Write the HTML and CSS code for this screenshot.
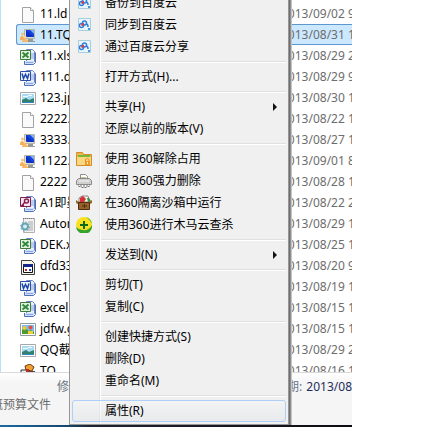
FILE: index.html
```html
<!DOCTYPE html>
<html lang="zh-CN">
<head>
  <meta charset="UTF-8">
  <title>文件列表</title>
  <link rel="stylesheet" href="styles.css">
</head>
<body>

  <!-- icon shapes -->
  <svg class="defs" aria-hidden="true">
    <symbol id="i-file" viewBox="0 0 16 16">
      <path d="M2.500 .5h8l3 3v12h-11z" fill="#fafafa" stroke="#a3a3a3"/>
      <path d="M10.500 .5v3h3" fill="#fff" stroke="#a3a3a3"/>
    </symbol>
    <symbol id="i-user" viewBox="0 0 16 16">
      <path d="M4.500 1.500h10v9h-10z" fill="#dcdcd2" stroke="#b5b4a8"/>
      <path d="M6 2h8v7H6z" fill="#0a31c8"/>
      <path d="M6 2h3l5 5v2z" fill="#1746e0"/>
      <path d="M10 2h4v4z" fill="#7fb0f8"/>
      <path d="M8 11h5v2h2v1H7v-1h1z" fill="#9a9a94"/>
      <circle cx="2.500" cy="6" r="1.500" fill="#f7c27a"/>
      <path d="M0 11q0-3 2.500-3L5 10v2H0z" fill="#f5ad58"/>
      <circle cx="5" cy="9" r="1.500" fill="#ffd595"/>
      <path d="M2 14q0-3 3-3t3 3z" fill="#f9b764"/>
    </symbol>
    <symbol id="i-pages" viewBox="0 0 16 16">
      <path d="M6.500 .5h6l2 2v10h-8z" fill="#e8f0fd" stroke="#6a86c4"/>
      <path d="M4.500 12v3.500h9l2-2v-10" fill="none" stroke="#4f70b8"/>
      <path d="M5 12h9v3H5z" fill="#cfdef8"/>
      <path d="M11 5h3M11 7h3M11 9h3M6 13.500h7" stroke="#8fa9de"/>
    </symbol>
    <symbol id="i-xls" viewBox="0 0 16 16">
      <use href="#i-pages"/>
      <path d="M.5 1.500h10v9H.5z" fill="#e3f3df" stroke="#3c7a3e"/>
      <path d="M2.500 3.500l6 5M8.500 3.500l-6 5" stroke="#2f8a3b" stroke-width="2"/>
    </symbol>
    <symbol id="i-doc" viewBox="0 0 16 16">
      <use href="#i-pages"/>
      <path d="M.5 1.500h10v9H.5z" fill="#edf3ff" stroke="#2b50a4"/>
      <path d="M2 3.500l1.500 5 2-4 2 4 1.500-5" fill="none" stroke="#1d45a8" stroke-width="1.500"/>
    </symbol>
    <symbol id="i-mdb" viewBox="0 0 16 16">
      <use href="#i-pages"/>
      <path d="M.5 1.500h10v9H.5z" fill="#f7e8f0" stroke="#7c1f4d"/>
      <circle cx="6.500" cy="5" r="2" fill="none" stroke="#8b1e50" stroke-width="1.500"/>
      <path d="M5 6L2 9.500h2" fill="none" stroke="#8b1e50" stroke-width="1.500"/>
    </symbol>
    <symbol id="i-img" viewBox="0 0 16 16">
      <path d="M.5 1.500h15v12H.5z" fill="#fff" stroke="#a8a8a8"/>
      <path d="M2 3h12v9H2z" fill="#a9dbf4"/>
      <path d="M3 5h5v1H3zM8 4h4v1H8z" fill="#f4fbff"/>
      <path d="M2 9l4-2 3 2 5-2v5H2z" fill="#34806f"/>
      <path d="M2 11h12v1H2z" fill="#2e86bd"/>
    </symbol>
    <symbol id="i-gif" viewBox="0 0 16 16">
      <path d="M.5 1.500h15v12H.5z" fill="#fff" stroke="#8f9a9c"/>
      <path d="M2 3h12v9H2z" fill="#7bb8f0"/>
      <path d="M2 8l3-2 4 3 2-1 3 2v2H2z" fill="#4d9a32"/>
      <circle cx="4.500" cy="6" r="2" fill="#f0cb2d"/>
      <circle cx="10.500" cy="5.500" r="2" fill="#e0503a"/>
      <path d="M8 9h5v3H8z" fill="#f4d03b"/>
    </symbol>
    <symbol id="i-ini" viewBox="0 0 16 16">
      <path d="M3.500 1.500h11v14h-11z" fill="#f2f2f2" stroke="#b0b0b0"/>
      <path d="M3 1.500h12" stroke="#777" stroke-dasharray="1 1"/>
      <path d="M8 5h5M9 7h4M10 9h3M9 11h4M8 13h5" stroke="#a9a9a9"/>
      <circle cx="5" cy="9.500" r="3" fill="#d9eef2" stroke="#6aa5b3" stroke-width="2"/>
      <circle cx="5" cy="9.500" r="4.500" fill="none" stroke="#6aa5b3" stroke-dasharray="1.500 2"/>
    </symbol>
    <symbol id="i-bat" viewBox="0 0 16 16">
      <path d="M1.500 1.500h10l3 3v11h-13z" fill="#f7f5e6" stroke="#3f3f3f"/>
      <path d="M3.500 5.500h9v8h-9z" fill="#fff" stroke="#111"/>
      <path d="M3 5h10v3H3z" fill="#16258c"/>
      <path d="M5 10h2v2H5z" fill="#d02020"/>
      <path d="M9 10h2v2H9z" fill="#2440d0"/>
    </symbol>
    <symbol id="i-tq" viewBox="0 0 16 16">
      <path d="M5 2l5-2 4 3-2 4-6-1z" fill="#f0a030" stroke="#6b3a12"/>
      <path d="M1 6h8v8H1z" fill="#e9eef7" stroke="#333"/>
      <path d="M3 8h4v3H3z" fill="#2f63c8"/>
      <path d="M9 7h6v7H9z" fill="#55483c"/>
      <path d="M6 5h3v3H6z" fill="#c22b1d"/>
    </symbol>
    <symbol id="i-cloud" viewBox="0 0 16 16">
      <path d="M2.500 1.500h12v12h-12z" fill="#e8f6fb" stroke="#a5cfdd"/>
      <circle cx="8.500" cy="6" r="2" fill="none" stroke="#2c7fe0" stroke-width="1.500"/>
      <circle cx="5.500" cy="8.500" r="2" fill="#fff" stroke="#2c7fe0" stroke-width="1.500"/>
      <path d="M5.500 8.500l2.500-2" stroke="#e23b35" stroke-width="2"/>
      <path d="M10 7q2 0 2 3" fill="none" stroke="#2c7fe0" stroke-width="1.500"/>
      <path d="M12 11h2v2h-2z" fill="#4a94e6"/>
    </symbol>
    <symbol id="i-unlock" viewBox="0 0 16 16">
      <path d="M.5 3.500v-2h6l1 2h8v11H.5z" fill="#f3b64a" stroke="#d28d26"/>
      <path d="M2 4h12v3H2z" fill="#74b83c"/>
      <path d="M1 6h14v8H1z" fill="#fbd782"/>
      <path d="M9 10h5v4H9z" fill="#f09a2c"/>
      <path d="M9.500 10V8.500q2-2 3.500 0V10" fill="none" stroke="#e58e25"/>
      <path d="M11 11h1v2h-1z" fill="#fff3cf"/>
    </symbol>
    <symbol id="i-shred" viewBox="0 0 16 16">
      <path d="M4.500 6V1.500h5l2 2V6" fill="#fff" stroke="#8d8d8d"/>
      <path d="M5 4h5v2H5z" fill="#b9c987"/>
      <path d="M2.500 5.500h11l2 2v4h-15v-4z" fill="#cfcfcf" stroke="#8a8a8a"/>
      <path d="M3 8h10" stroke="#f5f5f5"/>
      <path d="M3.500 12v2M6.500 12v3M9.500 12v3M12.500 12v2" stroke="#777" stroke-width="2"/>
      <path d="M3.500 12v1M6.500 12v2M9.500 12v2M12.500 12v1" stroke="#fff"/>
    </symbol>
    <symbol id="i-box" viewBox="0 0 16 16">
      <path d="M3 7V3l3-2h6l2 6z" fill="#f1f1ee" stroke="#8a8a80"/>
      <path d="M4 3l3-2 3 3-2 3H4z" fill="#d7303a"/>
      <path d="M11 3h2l2 3-3 1z" fill="#2f9a3c"/>
      <path d="M0 5l3 2h10l3-2v3l-2 1H2L0 8z" fill="#9a6527"/>
      <path d="M2.500 7.500h11v7h-11z" fill="#95602a" stroke="#4f2e0f"/>
      <path d="M6 11h5M8.500 9v4" stroke="#4f2e0f"/>
    </symbol>
    <symbol id="i-360" viewBox="0 0 16 16">
      <circle cx="8" cy="8" r="8" fill="#fbe11d"/>
      <path d="M0 10a8 8 0 0 0 16-2q-3 6-9 5-4 0-7-3z" fill="#35a32c"/>
      <path d="M10 0a8 8 0 0 1 6 7q-2-4-6-7z" fill="#6fbf2a"/>
      <path d="M8 4v8M4 8h8" stroke="#0d6a1c" stroke-width="2"/>
    </symbol>
  </svg>

  <div class="window">
    <div class="file-list">
      <table>
        <tr><td><svg class="icon"><use href="#i-file"/></svg>11.ld</td><td class="date">2013/09/02 9:12</td></tr>
        <tr class="selected"><td><svg class="icon"><use href="#i-user"/></svg>11.TQ</td><td class="date">2013/08/31 11:20</td></tr>
        <tr><td><svg class="icon"><use href="#i-xls"/></svg>11.xls</td><td class="date">2013/08/29 20:15</td></tr>
        <tr><td><svg class="icon"><use href="#i-doc"/></svg>111.doc</td><td class="date">2013/08/29 9:30</td></tr>
        <tr><td><svg class="icon"><use href="#i-img"/></svg>123.jpg</td><td class="date">2013/08/30 15:08</td></tr>
        <tr><td><svg class="icon"><use href="#i-file"/></svg>2222.ld</td><td class="date">2013/08/22 14:30</td></tr>
        <tr><td><svg class="icon"><use href="#i-user"/></svg>3333.TQ</td><td class="date">2013/08/27 10:42</td></tr>
        <tr><td><svg class="icon"><use href="#i-user"/></svg>1122.TQ</td><td class="date">2013/09/01 8:50</td></tr>
        <tr><td><svg class="icon"><use href="#i-file"/></svg>2222</td><td class="date">2013/08/28 16:21</td></tr>
        <tr><td><svg class="icon"><use href="#i-mdb"/></svg>A1即墨</td><td class="date">2013/08/22 20:11</td></tr>
        <tr><td><svg class="icon"><use href="#i-ini"/></svg>Autorun</td><td class="date">2013/08/29 15:02</td></tr>
        <tr><td><svg class="icon"><use href="#i-xls"/></svg>DEK.xls</td><td class="date">2013/08/25 13:40</td></tr>
        <tr><td><svg class="icon"><use href="#i-bat"/></svg>dfd333</td><td class="date">2013/08/20 9:05</td></tr>
        <tr><td><svg class="icon"><use href="#i-doc"/></svg>Doc1</td><td class="date">2013/08/19 17:33</td></tr>
        <tr><td><svg class="icon"><use href="#i-xls"/></svg>excel</td><td class="date">2013/08/15 11:27</td></tr>
        <tr><td><svg class="icon"><use href="#i-gif"/></svg>jdfw.gif</td><td class="date">2013/08/15 14:18</td></tr>
        <tr><td><svg class="icon"><use href="#i-img"/></svg>QQ截图</td><td class="date">2013/08/29 21:09</td></tr>
        <tr><td><svg class="icon"><use href="#i-tq"/></svg>TQ</td><td class="date">2013/08/16 10:10</td></tr>
      </table>
    </div>

    <div class="details">
      <div class="props">
        <span class="modified">修改日期:</span>
        <span class="created">创建日期: <b>2013/08/31</b></span>
      </div>
      <div class="file-type"><span>概预算文件</span></div>
    </div>
    <div class="taskbar"></div>
  </div>

  <div class="menu" role="menu">
    <button role="menuitem"><svg class="icon"><use href="#i-cloud"/></svg>备份到百度云</button>
    <button role="menuitem"><svg class="icon"><use href="#i-cloud"/></svg>同步到百度云</button>
    <button role="menuitem"><svg class="icon"><use href="#i-cloud"/></svg>通过百度云分享</button>
    <hr>
    <button role="menuitem">打开方式(H)...</button>
    <hr>
    <button role="menuitem" class="more">共享(H)</button>
    <button role="menuitem">还原以前的版本(V)</button>
    <hr>
    <button role="menuitem"><svg class="icon"><use href="#i-unlock"/></svg>使用 360解除占用</button>
    <button role="menuitem"><svg class="icon"><use href="#i-shred"/></svg>使用 360强力删除</button>
    <button role="menuitem"><svg class="icon"><use href="#i-box"/></svg>在360隔离沙箱中运行</button>
    <button role="menuitem"><svg class="icon"><use href="#i-360"/></svg>使用360进行木马云查杀</button>
    <hr>
    <button role="menuitem" class="more">发送到(N)</button>
    <hr>
    <button role="menuitem">剪切(T)</button>
    <button role="menuitem">复制(C)</button>
    <hr>
    <button role="menuitem">创建快捷方式(S)</button>
    <button role="menuitem">删除(D)</button>
    <button role="menuitem">重命名(M)</button>
    <hr>
    <button role="menuitem" class="active">属性(R)</button>
  </div>

</body>
</html>
```
FILE: styles.css
```css
* {
  box-sizing: border-box;
}

body {
  margin: 0;
  height: 100vh;
  overflow: hidden;
  position: relative;
  background: #fff;
  font-family: "Noto Sans", "Noto Sans CJK SC", sans-serif;
  font-size: 12px;
  line-height: 18px;
  color: #000;
}

.defs {
  position: absolute;
  width: 0;
  height: 0;
}

.icon {
  width: 16px;
  height: 16px;
  flex: none;
}

.window {
  display: flex;
  flex-direction: column;
  height: 100%;
  margin-right: 83px;
}

/* file list */
.file-list {
  flex: 1;
  min-height: 0;
  overflow: hidden;
  padding: 3px 0 0 15px;
  border-left: 1px solid #b5e2f5;
}

.file-list table {
  width: 100%;
  table-layout: fixed;
  border-collapse: separate;
  border-spacing: 0;
}

.file-list td {
  height: 21px;
  padding: 0 0 0 4px;
  line-height: 19px;
  white-space: nowrap;
  overflow: hidden;
}

.file-list td .icon {
  margin-right: 4px;
  vertical-align: middle;
}

.file-list .date {
  width: 71px;
  padding-left: 0;
  color: #6d6d6d;
}

.selected td {
  background: #cbe8ff;
  border-top: 1px solid #5d97cf;
  border-bottom: 1px solid #5d97cf;
}

.selected td:first-child {
  padding-left: 3px;
  border-left: 1px solid #5d97cf;
  border-radius: 3px 0 0 3px;
}

/* details pane */
.details {
  height: 53px;
  padding-top: 5px;
  overflow: hidden;
  background: linear-gradient(#fff, #f5f5f5 10px);
  border-top: 1px solid #d9d9d9;
  color: #6d7583;
}

.props {
  display: flex;
  justify-content: space-between;
  padding-left: 57px;
  white-space: nowrap;
}

.created {
  width: 101px;
}

.created b {
  margin-left: 1px;
  font-weight: normal;
  color: #1e2f5c;
}

.file-type {
  display: flex;
  justify-content: flex-end;
  width: 51px;
  overflow: hidden;
  white-space: nowrap;
  color: #6d6d6d;
}

.taskbar {
  height: 2px;
  background: linear-gradient(to right, #1a6aa0, #14456b 70px, #20222e 90px, #0c0c14);
}

/* context menu */
.menu {
  position: absolute;
  left: 69px;
  bottom: 2px;
  width: 220px;
  padding: 2px;
  border: 1px solid #979797;
  background: linear-gradient(to right, #f0f0f0 29px, #e2e3e3 29px, #e2e3e3 30px, #fff 30px, #fff 31px, #f0f0f0 31px);
  box-shadow: 1px 0 0 #6e6e6e, 2px 0 0 #8f8f8f, 3px 0 0 #c4c4c4;
}

.menu button {
  display: flex;
  align-items: center;
  width: 100%;
  height: 22px;
  padding: 0 9px 0 33px;
  border: 0;
  border-radius: 3px;
  background: none;
  font: inherit;
  color: inherit;
  text-align: left;
  white-space: nowrap;
}

.menu .icon {
  margin-left: -29px;
  margin-right: 13px;
}

.menu hr {
  height: 2px;
  margin: 3px 0 3px 29px;
  border: 0;
  border-top: 1px solid #e0e0e0;
  border-bottom: 1px solid #fff;
}

.menu .more::after {
  content: "";
  margin-left: auto;
  border: 4px solid transparent;
  border-left-color: #111;
  border-right-width: 0;
}

.menu .active {
  padding-left: 32px;
  border: 1px solid #aecff7;
  background: linear-gradient(rgba(255, 255, 255, 0.2), rgba(220, 225, 232, 0.4));
}

.menu button:hover {
  background-color: #e8eef6;
}
```
